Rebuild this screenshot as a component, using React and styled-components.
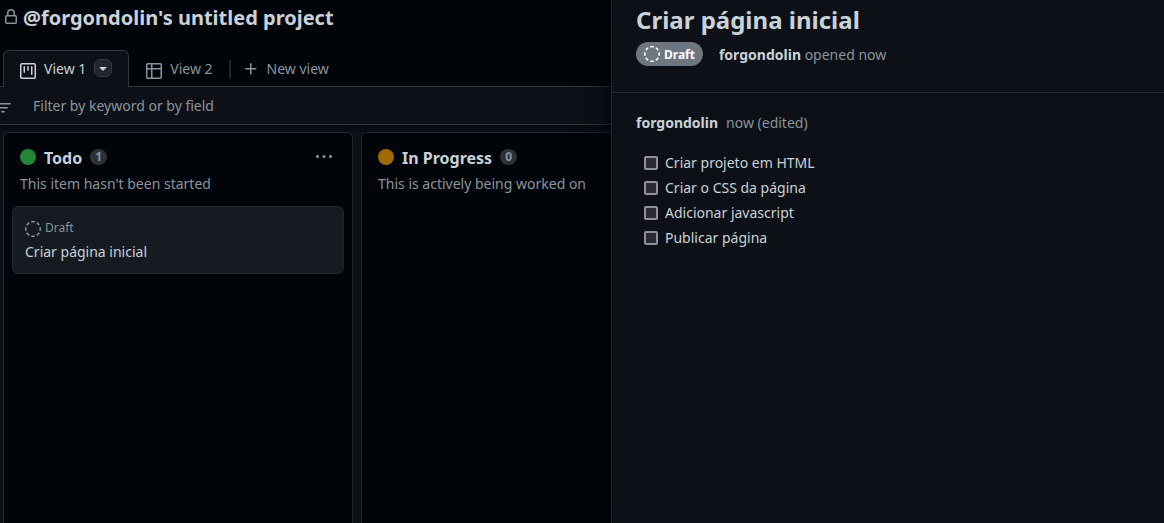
import React from 'react';
import styled, {createGlobalStyle} from "styled-components";

const GlobalStyle = createGlobalStyle`
  * { box-sizing: border-box; }

  body {
    margin: 0;
    background: #0d1117;
    color: #c9d1d9;
    font-family: "Noto Sans", sans-serif;
    font-size: 14px;
    line-height: 21px;
    overflow: hidden;
  }
`;

const Page = styled.div`
  display: flex;
  height: 523px;
  overflow: hidden;
`;

const Board = styled.main`
  display: flex;
  flex-direction: column;
  width: 611px;
  overflow: hidden;
  background: #0d1117;
`;

const Icon = styled.svg`
  display: block;
  flex: none;
  width: 16px;
  height: 16px;
  fill: currentColor;
`;

const Header = styled.header`
  display: flex;
  align-items: flex-start;
  gap: 4px;
  height: 50px;
  padding: 3px 0 0 3px;
  background: #010409;
  color: #8b949e;

  svg { margin-top: 6px; }
`;

const ProjectTitle = styled.h1`
  margin: 0;
  font-size: 20px;
  font-weight: 700;
  line-height: 30px;
  white-space: nowrap;
  color: #c9d1d9;
`;

const Tabs = styled.nav`
  display: flex;
  height: 37px;
  padding-left: 3px;
  background: #010409;
  box-shadow: inset 0 -1px #30363d;
`;

const Tab = styled.div`
  display: flex;
  align-items: center;
  gap: 8px;
  height: 37px;
  padding: 0 16px 2px;
  border: 1px solid ${({active}) => active ? "#30363d" : "transparent"};
  border-bottom: 0;
  border-radius: 6px 6px 0 0;
  background: ${({active}) => active ? "#0d1117" : "transparent"};
  color: ${({active}) => active ? "#c9d1d9" : "#8b949e"};
  white-space: nowrap;

  > svg { margin-top: 6px; }
`;

const ViewMenu = styled.button`
  display: flex;
  align-items: center;
  justify-content: center;
  width: 18px;
  height: 18px;
  padding: 0;
  border: 1px solid #363b42;
  border-radius: 6px;
  background: #21262d;
  color: #c9d1d9;
`;

const TabDivider = styled.div`
  width: 2px;
  height: 19px;
  margin: 10px 0 0 -1px;
  background: #21262d;
`;

const NewView = styled.div`
  display: flex;
  align-items: center;
  gap: 8px;
  padding-left: 12px;
  color: #8b949e;
`;

const FilterBar = styled.div`
  display: flex;
  align-items: center;
  gap: 22px;
  height: 38px;
  margin-left: -5px;
  border-bottom: 1px solid #30363d;
  color: #8b949e;

  svg { margin-top: 4px; }
`;

const Columns = styled.div`
  display: flex;
  flex: 1;
  gap: 8px;
  padding: 7px 0 0 3px;
  background: linear-gradient(#06090e, #0d1117 8px);
`;

const Column = styled.section`
  flex: none;
  width: 350px;
  padding: 14px 8px 0;
  border: 1px solid #21262d;
  border-bottom: 0;
  border-radius: 6px 6px 0 0;
  background: #010409;
`;

const ColumnHeader = styled.div`
  display: flex;
  align-items: center;
  height: 20px;
  padding: 0 12px 0 8px;
  color: #8b949e;

  > svg { margin-left: auto; }
`;

const Dot = styled.span`
  width: 16px;
  height: 16px;
  border-radius: 50%;
  background: ${({color}) => color};
`;

const ColumnTitle = styled.h2`
  margin: 1px 8px 0;
  font-size: 16px;
  font-weight: 700;
  line-height: 24px;
  color: #c9d1d9;
`;

const Counter = styled.span`
  min-width: 17px;
  height: 16px;
  padding: 0 5px;
  border-radius: 8px;
  background: #2d3139;
  font-size: 12px;
  font-weight: 700;
  line-height: 16px;
  text-align: center;
`;

const Description = styled.p`
  margin: 6px 8px 12px;
  color: #8b949e;
`;

const Card = styled.div`
  height: 68px;
  padding: 10px 12px;
  border: 1px solid #21262d;
  border-radius: 6px;
  background: #161b22;
`;

const CardMeta = styled.div`
  display: flex;
  align-items: center;
  gap: 4px;
  height: 20px;
  font-size: 12px;
  color: #8b949e;

  svg { margin-top: 4px; }
`;

const CardTitle = styled.div`
  margin-top: 4px;
`;

const Panel = styled.aside`
  flex: 1;
  border-left: 1px solid #21262d;
  background: #0d1117;
  box-shadow: 0 0 28px #010409;
  position: relative;
`;

const PanelHeader = styled.div`
  height: 93px;
  padding: 2px 24px 0;
  border-bottom: 1px solid #21262d;
`;

const PanelTitle = styled.h2`
  margin: 0;
  font-size: 24px;
  font-weight: 700;
  line-height: 36px;
`;

const Meta = styled.div`
  display: flex;
  align-items: center;
  gap: 16px;
  margin-top: 4px;
  color: #8b949e;
`;

const Author = styled.strong`
  font-weight: 700;
  color: #c9d1d9;
`;

const Badge = styled.span`
  display: flex;
  align-items: center;
  gap: 4px;
  height: 24px;
  padding: 0 8px;
  border-radius: 12px;
  background: #6e7681;
  color: #fff;
  font-size: 12px;
  font-weight: 700;
`;

const Comment = styled.div`
  padding: 19px 24px;
`;

const CommentMeta = styled.div`
  display: flex;
  gap: 8px;
  color: #8b949e;
`;

const Tasks = styled.ul`
  display: flex;
  flex-direction: column;
  gap: 4px;
  margin: 19px 0 0;
  padding: 0 0 0 8px;
  list-style: none;
`;

const Task = styled.li`
  display: flex;
  align-items: center;
  gap: 7px;
`;

const Checkbox = styled.input`
  appearance: none;
  width: 14px;
  height: 14px;
  margin: 0;
  border: 2px solid #8f8f9d;
  border-radius: 2px;
  background: #2b2a33;
`;

const paths = {
    lock: "M4 4v2h-.25A1.75 1.75 0 002 7.75v5.5c0 .966.784 1.75 1.75 1.75h8.5A1.75 1.75 0 0014 13.25v-5.5A1.75 1.75 0 0012.25 6H12V4a4 4 0 10-8 0zm6.5 2V4a2.5 2.5 0 10-5 0v2h5zM12 7.5h.25a.25.25 0 01.25.25v5.5a.25.25 0 01-.25.25h-8.5a.25.25 0 01-.25-.25v-5.5a.25.25 0 01.25-.25H12z",
    board: "M1.75 0A1.75 1.75 0 000 1.75v12.5C0 15.216.784 16 1.75 16h12.5A1.75 1.75 0 0016 14.25V1.75A1.75 1.75 0 0014.25 0H1.75zM1.5 1.75a.25.25 0 01.25-.25h12.5a.25.25 0 01.25.25v12.5a.25.25 0 01-.25.25H1.75a.25.25 0 01-.25-.25V1.75zM11.75 3a.75.75 0 00-.75.75v7.5a.75.75 0 001.5 0v-7.5a.75.75 0 00-.75-.75zm-8.25.75a.75.75 0 011.5 0v5.5a.75.75 0 01-1.5 0v-5.5zM8 3a.75.75 0 00-.75.75v3.5a.75.75 0 001.5 0v-3.5A.75.75 0 008 3z",
    table: "M0 1.75C0 .784.784 0 1.75 0h12.5C15.216 0 16 .784 16 1.75v12.5A1.75 1.75 0 0114.25 16H1.75A1.75 1.75 0 010 14.25V1.75zM1.5 6.5v7.75c0 .138.112.25.25.25H5v-8H1.5zM5 5H1.5V1.75a.25.25 0 01.25-.25H5V5zm1.5 1.5v8h7.75a.25.25 0 00.25-.25V6.5h-8zm8-1.5h-8V1.5h7.75a.25.25 0 01.25.25V5z",
    plus: "M7.75 2a.75.75 0 01.75.75V7h4.25a.75.75 0 110 1.5H8.5v4.25a.75.75 0 11-1.5 0V8.5H2.75a.75.75 0 010-1.5H7V2.75A.75.75 0 017.75 2z",
    filter: "M.75 3a.75.75 0 000 1.5h14.5a.75.75 0 000-1.5H.75zM3 7.75A.75.75 0 013.75 7h8.5a.75.75 0 010 1.5h-8.5A.75.75 0 013 7.75zm3 4a.75.75 0 01.75-.75h2.5a.75.75 0 010 1.5h-2.5a.75.75 0 01-.75-.75z",
    kebab: "M8 9a1.5 1.5 0 100-3 1.5 1.5 0 000 3zM1.5 9a1.5 1.5 0 100-3 1.5 1.5 0 000 3zm13 0a1.5 1.5 0 100-3 1.5 1.5 0 000 3z",
    caret: "M4.427 7.427l3.396 3.396a.25.25 0 00.354 0l3.396-3.396A.25.25 0 0011.396 7H4.604a.25.25 0 00-.177.427z",
    draft: "M14.307 11.655a.75.75 0 0 1 .165 1.048 8.05 8.05 0 0 1-1.769 1.77.75.75 0 0 1-.883-1.214 6.552 6.552 0 0 0 1.44-1.439.75.75 0 0 1 1.047-.165Zm-2.652-9.962a.75.75 0 0 1 1.048-.165 8.05 8.05 0 0 1 1.77 1.769.75.75 0 0 1-1.214.883 6.552 6.552 0 0 0-1.439-1.44.75.75 0 0 1-.165-1.047ZM6.749.097a8.074 8.074 0 0 1 2.502 0 .75.75 0 1 1-.233 1.482 6.558 6.558 0 0 0-2.036 0A.751.751 0 0 1 6.749.097ZM.955 6.125a.75.75 0 0 1 .624.857 6.561 6.561 0 0 0 0 2.036.75.75 0 1 1-1.482.233 8.074 8.074 0 0 1 0-2.502.75.75 0 0 1 .858-.624Zm14.09 0a.75.75 0 0 1 .858.624c.13.829.13 1.673 0 2.502a.75.75 0 1 1-1.482-.233 6.561 6.561 0 0 0 0-2.036.75.75 0 0 1 .624-.857Zm-13.352 5.53a.75.75 0 0 1 1.048.165 6.552 6.552 0 0 0 1.439 1.44.75.75 0 0 1-.883 1.212 8.05 8.05 0 0 1-1.77-1.769.75.75 0 0 1 .166-1.048Zm2.652-9.962A.75.75 0 0 1 4.18 2.74a6.556 6.556 0 0 0-1.44 1.44.751.751 0 0 1-1.212-.883 8.05 8.05 0 0 1 1.769-1.77.75.75 0 0 1 1.048.166Zm1.78 13.352a.75.75 0 0 1 .857-.624 6.561 6.561 0 0 0 2.036 0 .75.75 0 1 1 .233 1.482 8.074 8.074 0 0 1-2.502 0 .75.75 0 0 1-.624-.858Z",
};

const Octicon = ({name}) => (
    <Icon viewBox="0 0 16 16" aria-hidden="true">
        <path fillRule="evenodd" d={paths[name]}/>
    </Icon>
);

function App() {
    const columns = [
        {title: "Todo", color: "#238636", description: "This item hasn't been started", cards: ["Criar página inicial"]},
        {title: "In Progress", color: "#9e6a03", description: "This is actively being worked on", cards: []},
    ];

    const tasks = [
        "Criar projeto em HTML",
        "Criar o CSS da página",
        "Adicionar javascript",
        "Publicar página",
    ];

    return (
        <Page>
            <GlobalStyle/>
            <Board>
                <Header>
                    <Octicon name="lock"/>
                    <ProjectTitle>@forgondolin's untitled project</ProjectTitle>
                </Header>
                <Tabs>
                    <Tab active={1}>
                        <Octicon name="board"/>
                        View 1
                        <ViewMenu aria-label="View options"><Octicon name="caret"/></ViewMenu>
                    </Tab>
                    <Tab>
                        <Octicon name="table"/>
                        View 2
                    </Tab>
                    <TabDivider/>
                    <NewView>
                        <Octicon name="plus"/>
                        New view
                    </NewView>
                </Tabs>
                <FilterBar>
                    <Octicon name="filter"/>
                    Filter by keyword or by field
                </FilterBar>
                <Columns>
                    {
                        columns.map((x, i) => <Column key={i}>
                            <ColumnHeader>
                                <Dot color={x.color}/>
                                <ColumnTitle>{x.title}</ColumnTitle>
                                <Counter>{x.cards.length}</Counter>
                                <Octicon name="kebab"/>
                            </ColumnHeader>
                            <Description>{x.description}</Description>
                            {
                                x.cards.map((card, j) => <Card key={j}>
                                    <CardMeta><Octicon name="draft"/>Draft</CardMeta>
                                    <CardTitle>{card}</CardTitle>
                                </Card>)
                            }
                        </Column>)
                    }
                </Columns>
            </Board>
            <Panel>
                <PanelHeader>
                    <PanelTitle>Criar página inicial</PanelTitle>
                    <Meta>
                        <Badge><Octicon name="draft"/>Draft</Badge>
                        <span><Author>forgondolin</Author> opened now</span>
                    </Meta>
                </PanelHeader>
                <Comment>
                    <CommentMeta>
                        <Author>forgondolin</Author>
                        now (edited)
                    </CommentMeta>
                    <Tasks>
                        {
                            tasks.map((x, i) => <Task key={i}>
                                <Checkbox type="checkbox" aria-label={x}/>
                                {x}
                            </Task>)
                        }
                    </Tasks>
                </Comment>
            </Panel>
        </Page>
    );
}

export default App;
